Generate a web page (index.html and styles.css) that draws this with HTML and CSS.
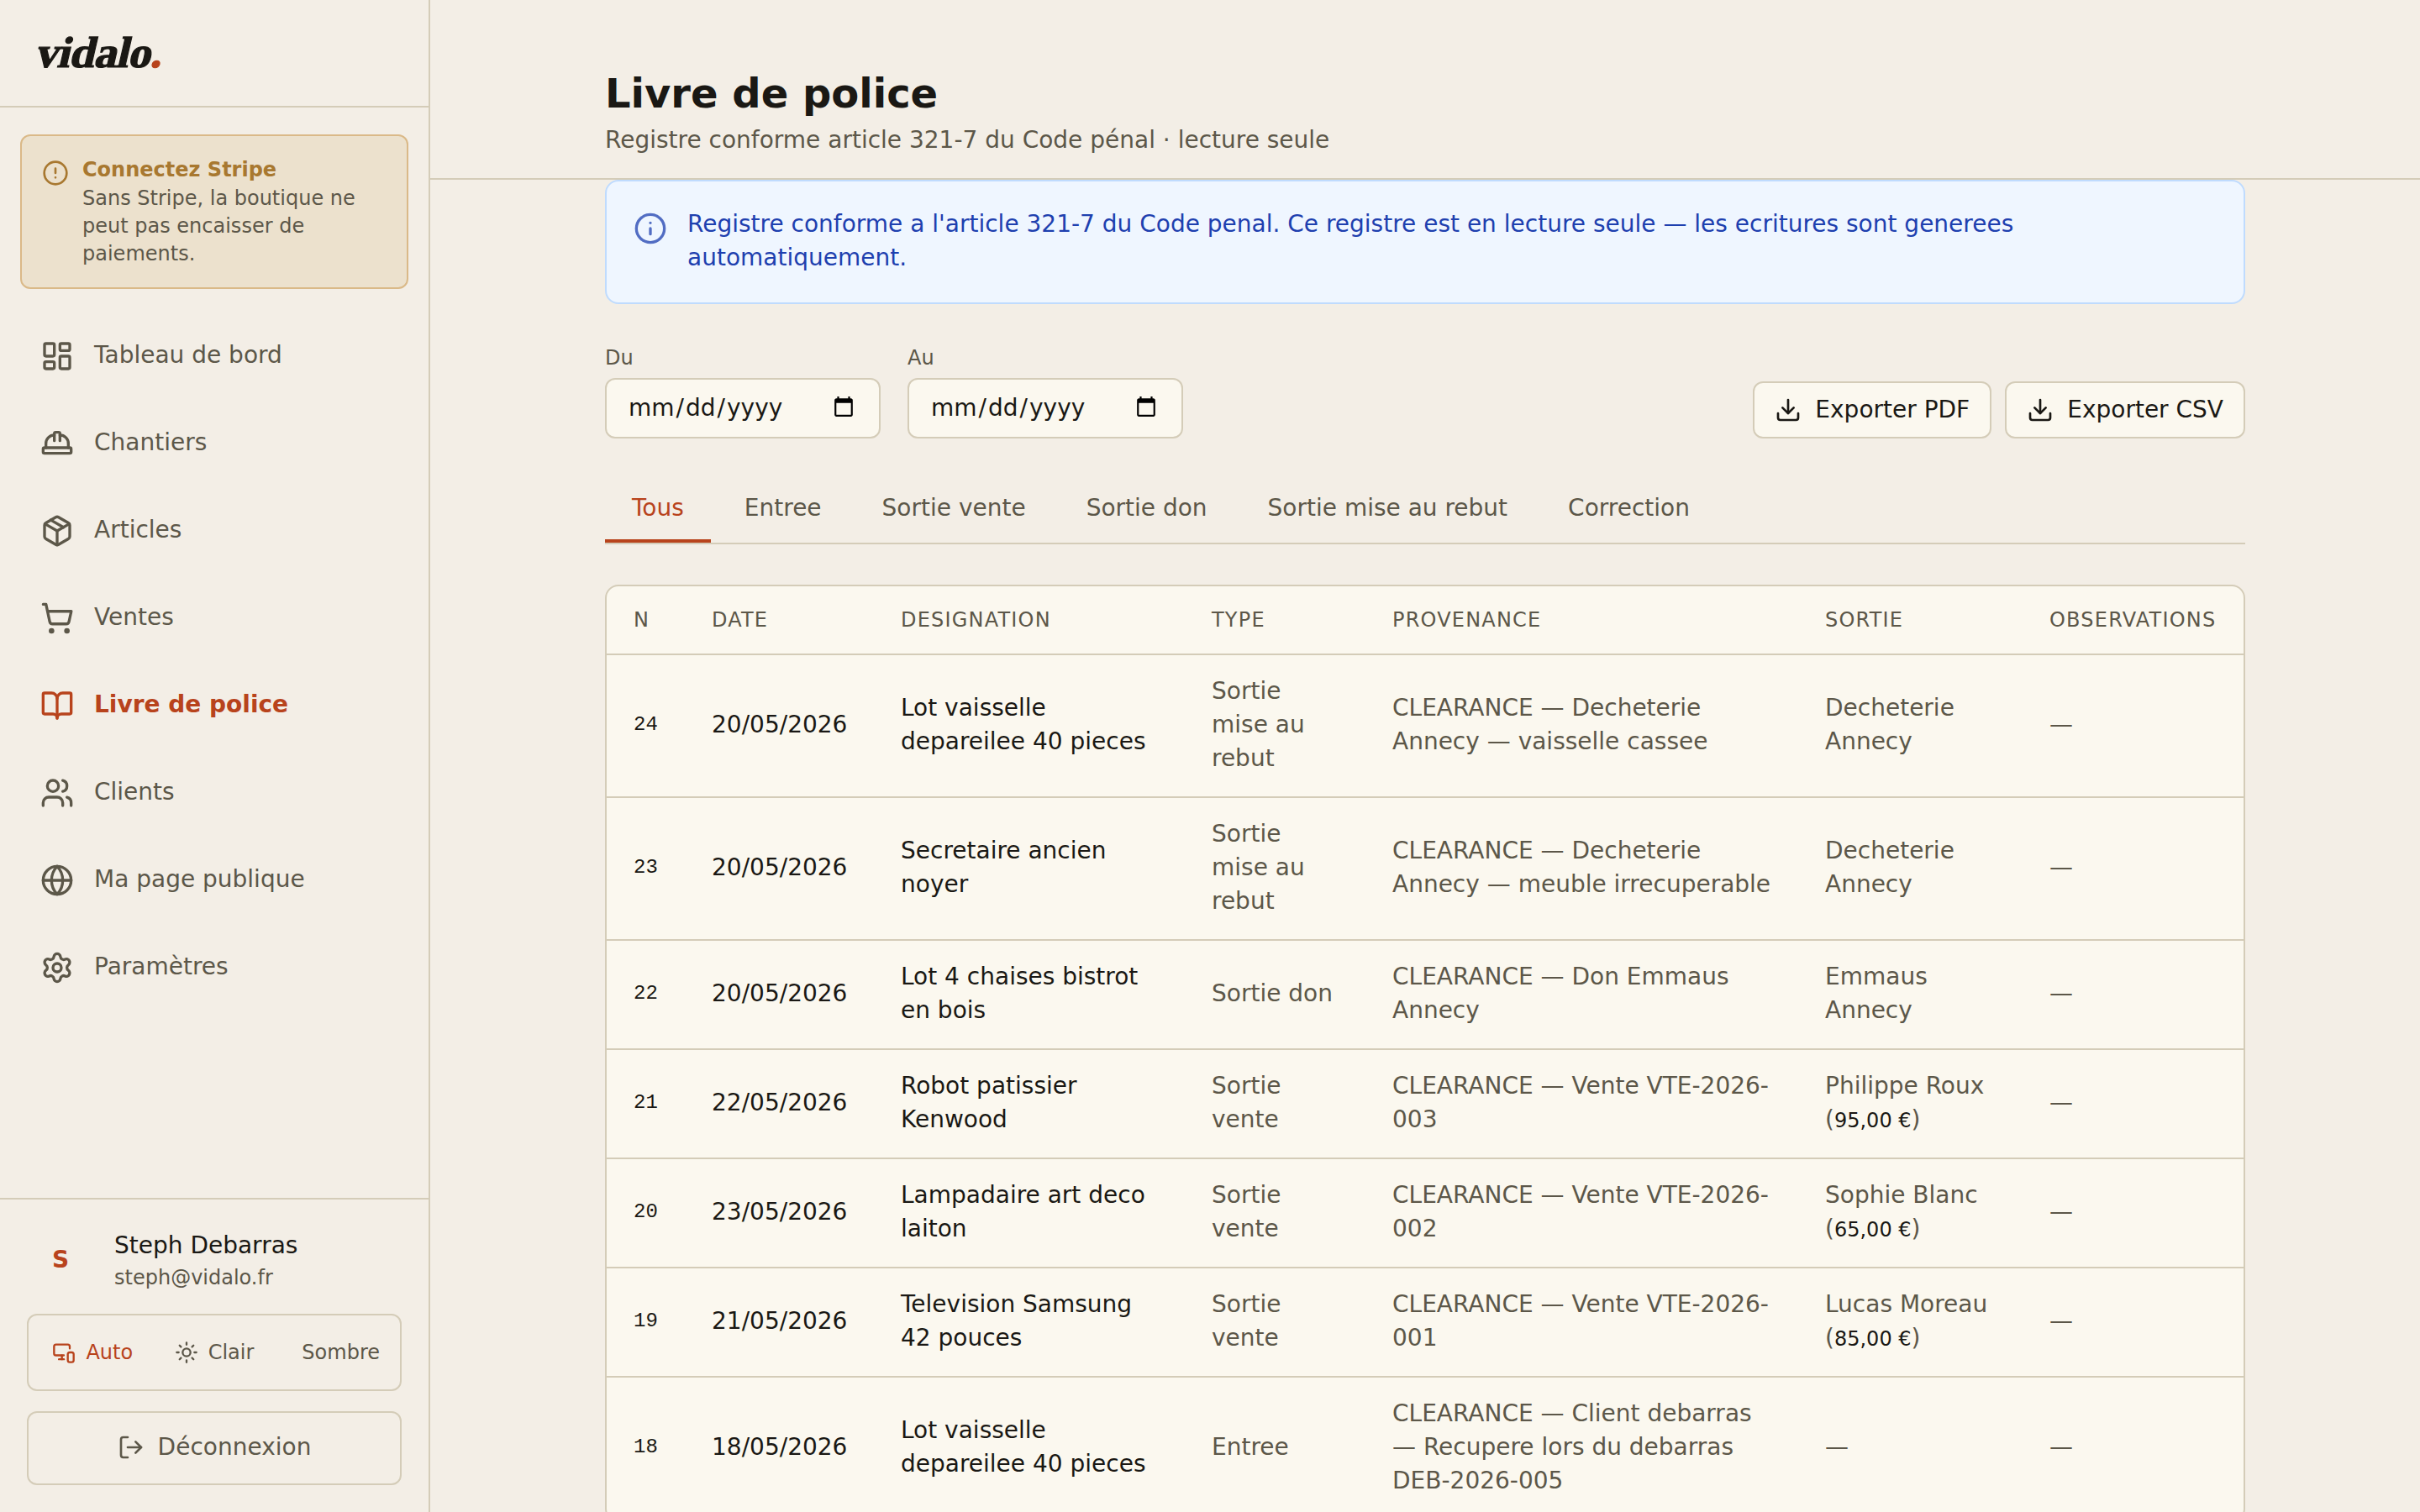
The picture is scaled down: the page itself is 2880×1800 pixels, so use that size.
FILE: index.html
```html
<!DOCTYPE html>
<html lang="fr">
<head>
<meta charset="utf-8">
<title>Livre de police — Vidalo</title>
<link rel="stylesheet" href="styles.css">
</head>
<body>
<div class="app">
  <aside class="sidebar">
    <div class="brand"><div class="brand-name">vidalo<span class="brand-dot">.</span></div></div>
    <div class="stripe">
      <svg class="icon icon-md" viewBox="0 0 24 24"><circle cx="12" cy="12" r="10"/><path d="M12 8v4M12 16h.01"/></svg>
      <div>
        <p class="stripe-title">Connectez Stripe</p>
        <p>Sans Stripe, la boutique ne peut pas encaisser de paiements.</p>
      </div>
    </div>
    <nav class="nav">
      <a class="nav-item"><svg class="icon icon-lg" viewBox="0 0 24 24"><rect width="7" height="9" x="3" y="3" rx="1"/><rect width="7" height="5" x="14" y="3" rx="1"/><rect width="7" height="9" x="14" y="12" rx="1"/><rect width="7" height="5" x="3" y="16" rx="1"/></svg><span>Tableau de bord</span></a>
      <a class="nav-item"><svg class="icon icon-lg" viewBox="0 0 24 24"><path d="M2 18a1 1 0 0 0 1 1h18a1 1 0 0 0 1-1v-2a1 1 0 0 0-1-1H3a1 1 0 0 0-1 1v2z"/><path d="M10 10V5a1 1 0 0 1 1-1h2a1 1 0 0 1 1 1v5"/><path d="M4 15v-3a6 6 0 0 1 6-6"/><path d="M14 6a6 6 0 0 1 6 6v3"/></svg><span>Chantiers</span></a>
      <a class="nav-item"><svg class="icon icon-lg" viewBox="0 0 24 24"><path d="m7.5 4.27 9 5.15"/><path d="M21 8a2 2 0 0 0-1-1.73l-7-4a2 2 0 0 0-2 0l-7 4A2 2 0 0 0 3 8v8a2 2 0 0 0 1 1.73l7 4a2 2 0 0 0 2 0l7-4A2 2 0 0 0 21 16Z"/><path d="m3.3 7 8.7 5 8.7-5"/><path d="M12 22V12"/></svg><span>Articles</span></a>
      <a class="nav-item"><svg class="icon icon-lg" viewBox="0 0 24 24"><circle cx="8" cy="21" r="1"/><circle cx="19" cy="21" r="1"/><path d="M2.05 2.05h2l2.66 12.42a2 2 0 0 0 2 1.58h9.78a2 2 0 0 0 1.95-1.57l1.65-7.43H5.12"/></svg><span>Ventes</span></a>
      <a class="nav-item is-active"><svg class="icon icon-lg" viewBox="0 0 24 24"><path d="M12 7v14"/><path d="M3 18a1 1 0 0 1-1-1V4a1 1 0 0 1 1-1h5a4 4 0 0 1 4 4 4 4 0 0 1 4-4h5a1 1 0 0 1 1 1v13a1 1 0 0 1-1 1h-6a3 3 0 0 0-3 3 3 3 0 0 0-3-3z"/></svg><span>Livre de police</span></a>
      <a class="nav-item"><svg class="icon icon-lg" viewBox="0 0 24 24"><path d="M16 21v-2a4 4 0 0 0-4-4H6a4 4 0 0 0-4 4v2"/><circle cx="9" cy="7" r="4"/><path d="M22 21v-2a4 4 0 0 0-3-3.87"/><path d="M16 3.13a4 4 0 0 1 0 7.75"/></svg><span>Clients</span></a>
      <a class="nav-item"><svg class="icon icon-lg" viewBox="0 0 24 24"><circle cx="12" cy="12" r="10"/><path d="M12 2a14.5 14.5 0 0 0 0 20 14.5 14.5 0 0 0 0-20"/><path d="M2 12h20"/></svg><span>Ma page publique</span></a>
      <a class="nav-item"><svg class="icon icon-lg" viewBox="0 0 24 24"><path d="M9.671 4.136a2.34 2.34 0 0 1 4.659 0 2.34 2.34 0 0 0 3.319 1.915 2.34 2.34 0 0 1 2.33 4.033 2.34 2.34 0 0 0 0 3.831 2.34 2.34 0 0 1-2.33 4.033 2.34 2.34 0 0 0-3.319 1.915 2.34 2.34 0 0 1-4.659 0 2.34 2.34 0 0 0-3.32-1.915 2.34 2.34 0 0 1-2.33-4.033 2.34 2.34 0 0 0 0-3.831A2.34 2.34 0 0 1 6.35 6.051a2.34 2.34 0 0 0 3.319-1.915"/><circle cx="12" cy="12" r="3"/></svg><span>Paramètres</span></a>
    </nav>
    <div class="account">
      <div class="user">
        <div class="avatar">S</div>
        <div>
          <p class="user-name">Steph Debarras</p>
          <p class="user-mail">steph@vidalo.fr</p>
        </div>
      </div>
      <div class="theme">
        <span class="theme-option is-active"><svg class="icon icon-sm" viewBox="0 0 24 24"><path d="M18 8V6a2 2 0 0 0-2-2H4a2 2 0 0 0-2 2v7a2 2 0 0 0 2 2h8"/><path d="M10 19v-3.96 3.15"/><path d="M7 19h5"/><rect width="6" height="10" x="16" y="12" rx="2"/></svg>Auto</span>
        <span class="theme-option"><svg class="icon icon-sm" viewBox="0 0 24 24"><circle cx="12" cy="12" r="4"/><path d="M12 2v2M12 20v2M4.93 4.93l1.41 1.41M17.66 17.66l1.41 1.41M2 12h2M20 12h2M6.34 17.66l-1.41 1.41M19.07 4.93l-1.41 1.41"/></svg>Clair</span>
        <span class="theme-option theme-option-text">Sombre</span>
      </div>
      <button class="logout"><svg class="icon icon-md" viewBox="0 0 24 24"><path d="M9 21H5a2 2 0 0 1-2-2V5a2 2 0 0 1 2-2h4"/><path d="m16 17 5-5-5-5"/><path d="M21 12H9"/></svg>Déconnexion</button>
    </div>
  </aside>

  <main class="main">
    <header class="page-head">
      <h1>Livre de police</h1>
      <p>Registre conforme article 321-7 du Code pénal · lecture seule</p>
    </header>
    <div class="content">
      <div class="notice">
        <svg class="icon icon-lg" viewBox="0 0 24 24"><circle cx="12" cy="12" r="10"/><path d="M12 16v-4M12 8h.01"/></svg>
        <p>Registre conforme a l'article 321-7 du Code penal. Ce registre est en lecture seule — les ecritures sont generees automatiquement.</p>
      </div>
      <div class="toolbar">
        <label class="field"><span>Du</span><input type="date"></label>
        <label class="field"><span>Au</span><input type="date"></label>
        <div class="exports">
          <button class="btn"><svg class="icon icon-md" viewBox="0 0 24 24"><path d="M21 15v4a2 2 0 0 1-2 2H5a2 2 0 0 1-2-2v-4"/><path d="m7 10 5 5 5-5"/><path d="M12 15V3"/></svg>Exporter PDF</button>
          <button class="btn"><svg class="icon icon-md" viewBox="0 0 24 24"><path d="M21 15v4a2 2 0 0 1-2 2H5a2 2 0 0 1-2-2v-4"/><path d="m7 10 5 5 5-5"/><path d="M12 15V3"/></svg>Exporter CSV</button>
        </div>
      </div>
      <div class="tabs">
        <span class="tab is-active">Tous</span>
        <span class="tab">Entree</span>
        <span class="tab">Sortie vente</span>
        <span class="tab">Sortie don</span>
        <span class="tab">Sortie mise au rebut</span>
        <span class="tab">Correction</span>
      </div>
      <div class="card">
        <table>
          <colgroup><col class="c-n"><col class="c-date"><col class="c-des"><col class="c-type"><col class="c-prov"><col class="c-sortie"><col class="c-obs"></colgroup>
          <thead><tr><th>N</th><th>Date</th><th>Designation</th><th>Type</th><th>Provenance</th><th>Sortie</th><th>Observations</th></tr></thead>
          <tbody>
            <tr><td class="num">24</td><td class="ink">20/05/2026</td><td class="ink">Lot vaisselle depareilee 40 pieces</td><td>Sortie mise au rebut</td><td>CLEARANCE — Decheterie Annecy — vaisselle cassee</td><td>Decheterie Annecy</td><td>—</td></tr>
            <tr><td class="num">23</td><td class="ink">20/05/2026</td><td class="ink">Secretaire ancien noyer</td><td>Sortie mise au rebut</td><td>CLEARANCE — Decheterie Annecy — meuble irrecuperable</td><td>Decheterie Annecy</td><td>—</td></tr>
            <tr><td class="num">22</td><td class="ink">20/05/2026</td><td class="ink">Lot 4 chaises bistrot en bois</td><td>Sortie don</td><td>CLEARANCE — Don Emmaus Annecy</td><td>Emmaus Annecy</td><td>—</td></tr>
            <tr><td class="num">21</td><td class="ink">22/05/2026</td><td class="ink">Robot patissier Kenwood</td><td>Sortie vente</td><td>CLEARANCE — Vente VTE-2026-003</td><td>Philippe Roux (<span class="price">95,00 €</span>)</td><td>—</td></tr>
            <tr><td class="num">20</td><td class="ink">23/05/2026</td><td class="ink">Lampadaire art deco laiton</td><td>Sortie vente</td><td>CLEARANCE — Vente VTE-2026-002</td><td>Sophie Blanc (<span class="price">65,00 €</span>)</td><td>—</td></tr>
            <tr><td class="num">19</td><td class="ink">21/05/2026</td><td class="ink">Television Samsung 42 pouces</td><td>Sortie vente</td><td>CLEARANCE — Vente VTE-2026-001</td><td>Lucas Moreau (<span class="price">85,00 €</span>)</td><td>—</td></tr>
            <tr><td class="num">18</td><td class="ink">18/05/2026</td><td class="ink">Lot vaisselle depareilee 40 pieces</td><td>Entree</td><td>CLEARANCE — Client debarras — Recupere lors du debarras DEB-2026-005</td><td>—</td><td>—</td></tr>
          </tbody>
        </table>
      </div>
    </div>
  </main>
</div>
</body>
</html>
```
FILE: styles.css
```css
:root {
  --bg: #f3eee6;
  --surface: #fbf8ef;
  --line: #d4ccb8;
  --ink: #1a1814;
  --muted: #5c5749;
  --accent: #b8431c;
  --amber: #a87830;
}

* { box-sizing: border-box; margin: 0; padding: 0; }

body {
  background: var(--bg);
  color: var(--muted);
  font: 28px/40px "DejaVu Sans", sans-serif;
  height: 1800px;
  overflow: hidden;
}

.icon {
  flex: none;
  fill: none;
  stroke: currentColor;
  stroke-width: 2;
  stroke-linecap: round;
  stroke-linejoin: round;
}
.icon-sm { width: 28px; height: 28px; }
.icon-md { width: 32px; height: 32px; }
.icon-lg { width: 40px; height: 40px; }

.app { display: flex; height: 1800px; overflow: hidden; }

/* Sidebar */
.sidebar {
  display: flex;
  flex-direction: column;
  flex: none;
  width: 512px;
  border-right: 2px solid var(--line);
}
.brand {
  flex: none;
  height: 128px;
  padding: 0 41px;
  border-bottom: 2px solid var(--line);
}
.brand-name {
  color: var(--ink);
  font: bold 52px/126px "Liberation Serif", serif;
  letter-spacing: -.7px;
  -webkit-text-stroke: 1.2px currentColor;
  transform: skewX(-13deg) scaleX(1.04);
  transform-origin: 0 80px;
}
.brand-dot { color: var(--accent); }

.stripe {
  display: flex;
  gap: 16px;
  margin: 32px 24px 0;
  padding: 24px 24px 23px;
  border: 2px solid #dab988;
  border-radius: 12px;
  background: #ece1cd;
  font-size: 24px;
  line-height: 33px;
}
.stripe .icon { margin-top: 4px; color: var(--amber); }
.stripe-title { margin-bottom: 1px; color: var(--amber); font-weight: bold; }

.nav { flex: 1; padding-top: 28px; }
.nav-item {
  display: flex;
  align-items: center;
  gap: 24px;
  height: 104px;
  padding: 0 48px;
}
.nav-item span { margin-top: -2px; }
.nav-item.is-active { color: var(--accent); font-weight: bold; }

.account {
  display: flex;
  flex-direction: column;
  gap: 24px;
  padding: 32px;
  border-top: 2px solid var(--line);
}
.user { display: flex; align-items: center; gap: 32px; height: 80px; padding: 0 8px; }
.avatar { width: 64px; color: var(--accent); font-weight: bold; text-align: center; }
.user-name { color: var(--ink); line-height: 42px; padding-top: 1px; }
.user-mail { font-size: 24px; line-height: 35px; }
.theme {
  display: grid;
  grid-template-columns: repeat(3, 1fr);
  height: 92px;
  padding: 4px;
  border: 2px solid var(--line);
  border-radius: 12px;
  font-size: 24px;
}
.theme-option { display: flex; align-items: center; justify-content: center; gap: 12px; }
.theme-option.is-active { color: var(--accent); }
.theme-option-text { padding-left: 12px; }
.logout {
  display: flex;
  align-items: center;
  justify-content: center;
  gap: 16px;
  height: 88px;
  padding-bottom: 2px;
  border: 2px solid var(--line);
  border-radius: 12px;
  background: none;
  color: inherit;
  font: inherit;
}

/* Main column */
.main { flex: 1; min-width: 0; }
.page-head {
  height: 214px;
  padding: 81px 208px 0;
  border-bottom: 2px solid var(--line);
}
.page-head h1 { color: var(--ink); font-size: 48px; line-height: 60px; }
.page-head p { margin-top: 6px; }
.content { padding: 0 208px; }

.notice {
  display: flex;
  align-items: flex-start;
  gap: 24px;
  height: 148px;
  padding: 31px 32px 0;
  border: 2px solid #bfdbfe;
  border-radius: 16px;
  background: #eff6ff;
  color: #1e40af;
}
.notice .icon { margin-top: 5px; opacity: .75; }

.toolbar { display: flex; align-items: flex-end; gap: 32px; margin-top: 48px; }
.field { display: flex; flex-direction: column; gap: 8px; font-size: 24px; line-height: 32px; }
.field input {
  width: 328px;
  height: 72px;
  padding: 0 26px 2px 24px;
  border: 2px solid var(--line);
  border-radius: 12px;
  background: var(--surface);
  color: var(--ink);
  font: 28px "DejaVu Sans", sans-serif;
}
.field input::-webkit-datetime-edit-month-field,
.field input::-webkit-datetime-edit-day-field,
.field input::-webkit-datetime-edit-year-field { padding: 0 2px; }
.exports { display: flex; gap: 16px; margin-left: auto; }
.btn {
  display: flex;
  align-items: center;
  gap: 16px;
  height: 68px;
  padding: 0 24px 1px;
  border: 2px solid var(--line);
  border-radius: 12px;
  background: var(--surface);
  color: var(--ink);
  font: inherit;
}

.tabs {
  display: flex;
  gap: 8px;
  height: 86px;
  margin-top: 40px;
  border-bottom: 2px solid var(--line);
}
.tab { padding: 23px 32px 0; }
.tab.is-active { color: var(--accent); border-bottom: 4px solid var(--accent); }

.card {
  margin-top: 48px;
  border: 2px solid var(--line);
  border-radius: 16px;
  background: var(--surface);
}
table { width: 1948px; table-layout: fixed; border-collapse: separate; border-spacing: 0; }
.c-n { width: 93px; }
.c-date { width: 225px; }
.c-des { width: 370px; }
.c-type { width: 215px; }
.c-prov { width: 515px; }
.c-sortie { width: 267px; }
.c-obs { width: 263px; }
th, td { text-align: left; vertical-align: middle; border-bottom: 2px solid var(--line); }
th {
  height: 82px;
  padding: 0 0 0 32px;
  font-size: 24px;
  font-weight: normal;
  line-height: 32px;
  letter-spacing: .05em;
  text-transform: uppercase;
}
td { padding: 23px 32px 25px; }
td.ink { color: var(--ink); }
td.num { padding-right: 0; color: var(--ink); font: 24px/40px "Liberation Mono", monospace; }
.price { color: var(--ink); font-size: 24px; line-height: 1; white-space: nowrap; }
```
